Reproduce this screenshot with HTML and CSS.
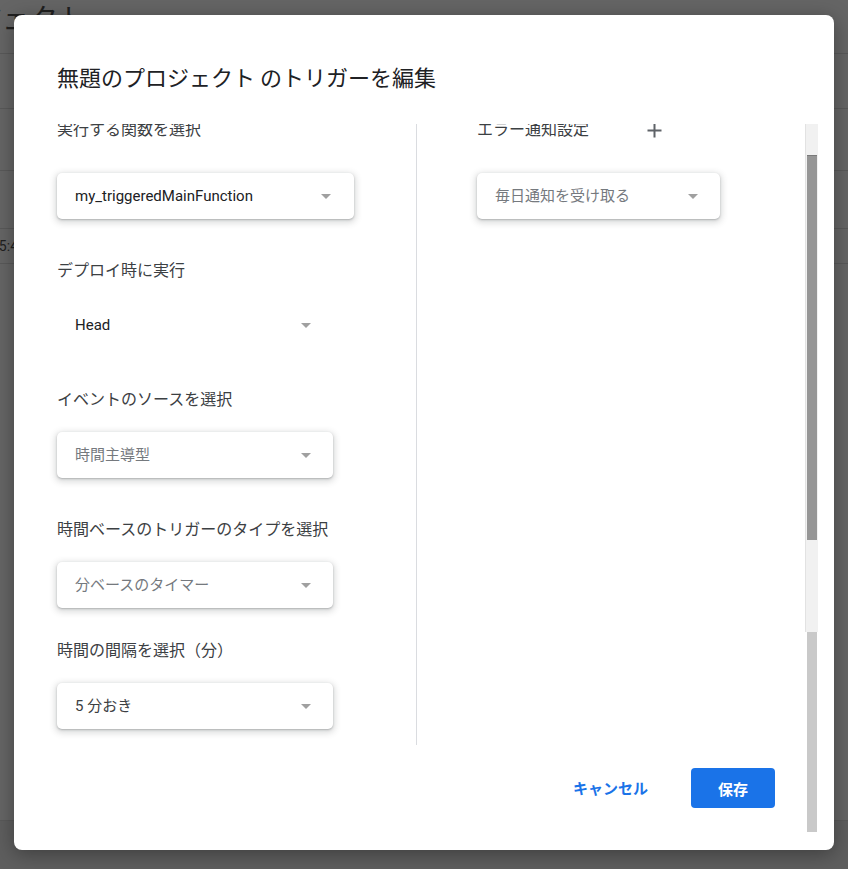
FILE: index.html
```html
<!DOCTYPE html>
<html lang="ja">
<head>
<meta charset="utf-8">
<title>トリガーを編集</title>
<link rel="stylesheet" href="styles.css">
</head>
<body>
<div class="page">
  <div class="bg">
    <div class="bg-row bg-head"><span class="bg-title">プロジェクト</span></div>
    <div class="bg-row r2"></div>
    <div class="bg-row r3"></div>
    <div class="bg-row r4"></div>
    <div class="bg-row r5"><span class="bg-time">15:45</span></div>
    <div class="bg-row r6"></div>
    <div class="bg-foot"></div>
  </div>

  <div class="dialog">
    <h2 class="dlg-title">無題のプロジェクト のトリガーを編集</h2>
    <div class="dlg-body">
      <div class="dlg-main">
        <div class="cols">
          <div class="col col-left">
            <div class="field">
              <div class="label label-first">実行する関数を選択</div>
              <div class="select select-wide"><span class="value">my_triggeredMainFunction</span><span class="caret"></span></div>
            </div>
            <div class="field">
              <div class="label label-tight">デプロイ時に実行</div>
              <div class="select select-flat"><span class="value">Head</span><span class="caret"></span></div>
            </div>
            <div class="field">
              <div class="label">イベントのソースを選択</div>
              <div class="select"><span class="value cjk muted">時間主導型</span><span class="caret"></span></div>
            </div>
            <div class="field field-tight">
              <div class="label">時間ベースのトリガーのタイプを選択</div>
              <div class="select"><span class="value cjk muted">分ベースのタイマー</span><span class="caret"></span></div>
            </div>
            <div class="field">
              <div class="label">時間の間隔を選択（分）</div>
              <div class="select"><span class="value cjk soft">5 分おき</span><span class="caret"></span></div>
            </div>
          </div>
          <div class="divider"></div>
          <div class="col col-right">
            <div class="label label-first label-row">
              <span>エラー通知設定</span>
              <svg class="plus" width="15" height="15" viewBox="0 0 15 15" aria-hidden="true"><path d="M7.5 0.5v14M0.5 7.5h14" stroke="#5f6368" stroke-width="2" fill="none"/></svg>
            </div>
            <div class="select select-right"><span class="value cjk muted">毎日通知を受け取る</span><span class="caret"></span></div>
          </div>
        </div>
        <div class="actions">
          <button class="btn-text">キャンセル</button>
          <button class="btn-primary">保存</button>
        </div>
      </div>
      <div class="scrollbar">
        <div class="sb-track">
          <div class="sb-thumb"></div>
        </div>
        <div class="sb-outer"></div>
      </div>
    </div>
  </div>
</div>
</body>
</html>
```

FILE: styles.css
```css
* { box-sizing: border-box; }

html, body {
  margin: 0;
  padding: 0;
}

body {
  font-family: Roboto, "Noto Sans CJK JP", sans-serif;
  background: #656565;
}

.page {
  position: relative;
  width: 848px;
  height: 869px;
  overflow: hidden;
  background: #656565;
}

/* underlying (dimmed) page */
.bg {
  display: flex;
  flex-direction: column;
  height: 100%;
}

.bg-row {
  border-bottom: 1px solid #595959;
  flex: none;
}

.bg-head { height: 54px; overflow: hidden; }
.r2 { height: 55px; }
.r3 { height: 62px; }
.r4 { height: 58px; }
.r5 { height: 35px; display: flex; align-items: center; }
.r6 { height: 557px; }
.bg-foot { flex: 1; background: #5e5e5e; }

.bg-title {
  display: block;
  font-family: "Noto Sans CJK JP", sans-serif;
  font-size: 28px;
  line-height: 34px;
  color: #202020;
  margin-left: -82px;
  white-space: nowrap;
}

.bg-time {
  font-size: 14px;
  color: #202020;
  margin-left: -9px;
}

/* dialog */
.dialog {
  position: absolute;
  left: 14px;
  top: 15px;
  width: 820px;
  height: 835px;
  background: #fff;
  border-radius: 8px;
  box-shadow: 0 4px 20px rgba(0, 0, 0, 0.35);
  display: flex;
  flex-direction: column;
  padding: 0 16px 18px 0;
}

.dlg-title {
  margin: 0 0 32px 0;
  padding: 45px 0 0 43px;
  font-family: "Noto Sans CJK JP", sans-serif;
  font-size: 22px;
  line-height: 32px;
  font-weight: 400;
  color: #202124;
}

.dlg-body {
  flex: 1;
  display: flex;
  min-height: 0;
}

.dlg-main {
  flex: 1;
  display: flex;
  flex-direction: column;
}

.cols {
  height: 621px;
  overflow: hidden;
  display: grid;
  grid-template-columns: 359px 1px 1fr;
  padding-left: 43px;
}

.col {
  margin-top: -6px;
}

.col-right {
  padding-left: 60px;
}

.divider {
  background: #dadce0;
}

.field {
  margin-bottom: 40px;
}

.field-tight {
  margin-bottom: 31px;
}

.label {
  font-size: 16px;
  line-height: 24px;
  color: #3c4043;
  margin-bottom: 20px;
  white-space: nowrap;
}

.label-first {
  margin-bottom: 31px;
}

.label-tight {
  margin-bottom: 19px;
}

.label-row {
  display: flex;
  align-items: center;
}

.plus {
  margin-left: 58px;
  margin-top: 1px;
}

.select {
  width: 276px;
  height: 46px;
  display: flex;
  align-items: center;
  justify-content: space-between;
  padding: 0 22px 0 18px;
  border-radius: 5px;
  background: #fff;
  box-shadow: 0 1px 2px 0 rgba(60, 64, 67, 0.3), 0 2px 6px 2px rgba(60, 64, 67, 0.18);
}

.select-wide {
  width: 297px;
  padding-right: 23px;
}

.select-flat {
  box-shadow: none;
}

.select-right {
  width: 243px;
}

.value {
  font-size: 15px;
  color: #202124;
  white-space: nowrap;
}

.value.cjk {
  padding-bottom: 4px;
}

.value.muted {
  color: #75797e;
}

.value.soft {
  color: #3c4043;
}

.caret {
  width: 0;
  height: 0;
  border-left: 5.5px solid transparent;
  border-right: 5.5px solid transparent;
  border-top: 5px solid #a0a0a0;
}

.actions {
  margin-top: 23px;
  display: flex;
  justify-content: flex-end;
  align-items: center;
  padding-right: 30px;
}

.btn-text {
  border: 0;
  background: none;
  padding: 0;
  margin-right: 43px;
  font-family: "Noto Sans CJK JP", sans-serif;
  font-size: 15px;
  font-weight: 600;
  color: #1a73e8;
  line-height: 20px;
}

.btn-primary {
  width: 84px;
  height: 40px;
  border: 0;
  border-radius: 4px;
  background: #1a73e8;
  color: #fff;
  font-family: "Noto Sans CJK JP", sans-serif;
  font-size: 15px;
  font-weight: 700;
}

/* scrollbars */
.scrollbar {
  width: 13px;
  display: flex;
  flex-direction: column;
}

.sb-track {
  height: 508px;
  background: #f1f1f1;
  border-left: 1px solid #e2e2e2;
  padding-top: 31px;
}

.sb-thumb {
  margin-left: 1px;
  width: 10px;
  height: 385px;
  background: #969696;
  border-top: 1px solid #7a7a7a;
}

.sb-outer {
  flex: 1;
  margin-left: 2px;
  width: 10px;
  background: #c9c9c9;
}
```
